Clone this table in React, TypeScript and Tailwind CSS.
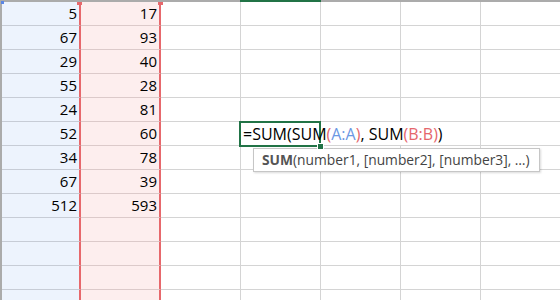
import React from "react";

const colA = ["5", "67", "29", "55", "24", "52", "34", "67", "512", "", "", "", ""];
const colB = ["17", "93", "40", "28", "81", "60", "78", "39", "593", "", "", "", ""];

function Formula() {
  return (
    <span className="relative z-10 whitespace-nowrap text-[16px] leading-[23px] text-black">
      =SUM(SUM<span className="text-[#e5666c]">(</span>
      <span className="text-[#6b98e3]">A:A</span>
      <span className="text-[#e5666c]">)</span>, SUM
      <span className="text-[#e5666c]">(B:B)</span>)
    </span>
  );
}

export default function App() {
  return (
    <div className="relative h-[300px] w-[560px] overflow-hidden bg-white font-['Open_Sans',sans-serif]">
      {/* column header edge */}
      <div className="flex h-[2px]">
        <div className="w-[240px] bg-[#ababab]" />
        <div className="w-[81px] bg-[#217346]" />
        <div className="flex-1 bg-[#ababab]" />
      </div>

      <div className="flex">
        <div className="w-[2px] shrink-0 bg-[#ababab]" />
        <div className="flex flex-col">
          {colA.map((a, i) => {
            const active = i === 5;
            return (
              <div key={i} className="flex h-[24px]">
                <div className="flex w-[79px] shrink-0 justify-end border-b border-r-2 border-b-[#c7ccd6] border-r-[#e7686c] bg-[#edf3fd] pr-[2px] text-[15px] leading-[23px] text-black">
                  {a}
                </div>
                <div className="flex w-[80px] shrink-0 justify-end border-b border-r-2 border-b-[#dccaca] border-r-[#e7686c] bg-[#fdeeee] pr-[2px] text-[15px] leading-[23px] text-black">
                  {colB[i]}
                </div>
                <div className="w-[80px] shrink-0 border-b border-r border-[#d4d4d4]" />
                <div
                  className={
                    active
                      ? "relative w-[80px] shrink-0 border-b border-[#d4d4d4] pl-[2px]"
                      : "w-[80px] shrink-0 border-b border-r border-[#d4d4d4]"
                  }
                >
                  {active && (
                    <>
                      <div className="absolute left-[-2px] top-[-1px] h-[26px] w-[82px] border-2 border-[#217346]" />
                      <div className="absolute left-[77px] top-[22px] z-20 h-[5px] w-[5px] bg-[#217346] outline outline-1 outline-white" />
                      <Formula />
                    </>
                  )}
                </div>
                <div
                  className={
                    active
                      ? "w-[80px] shrink-0 border-b border-[#d4d4d4]"
                      : "w-[80px] shrink-0 border-b border-r border-[#d4d4d4]"
                  }
                />
                <div className="w-[80px] shrink-0 border-b border-r border-[#d4d4d4]" />
                <div className="w-[80px] shrink-0 border-b border-r border-[#d4d4d4]" />
              </div>
            );
          })}
        </div>
      </div>

      {/* selection handles */}
      <div className="absolute left-[1px] top-[1px] h-[3px] w-[3px] bg-[#5b86e5]" />
      <div className="absolute left-[77px] top-[2px] h-[3px] w-[5px] bg-[#e7686c]" />
      <div className="absolute left-[158px] top-[2px] h-[3px] w-[5px] bg-[#e7686c]" />

      {/* function tooltip */}
      <div className="absolute left-[253px] top-[148px] flex h-[24px] w-[287px] items-center border border-[#c6c6c6] bg-white pl-[8px] text-[13.8px] text-[#444] shadow-[1px_1px_2px_rgba(0,0,0,0.15)]">
        <span className="font-bold text-[#555]">SUM</span>(number1, [number2], [number3], …)
      </div>
    </div>
  );
}
